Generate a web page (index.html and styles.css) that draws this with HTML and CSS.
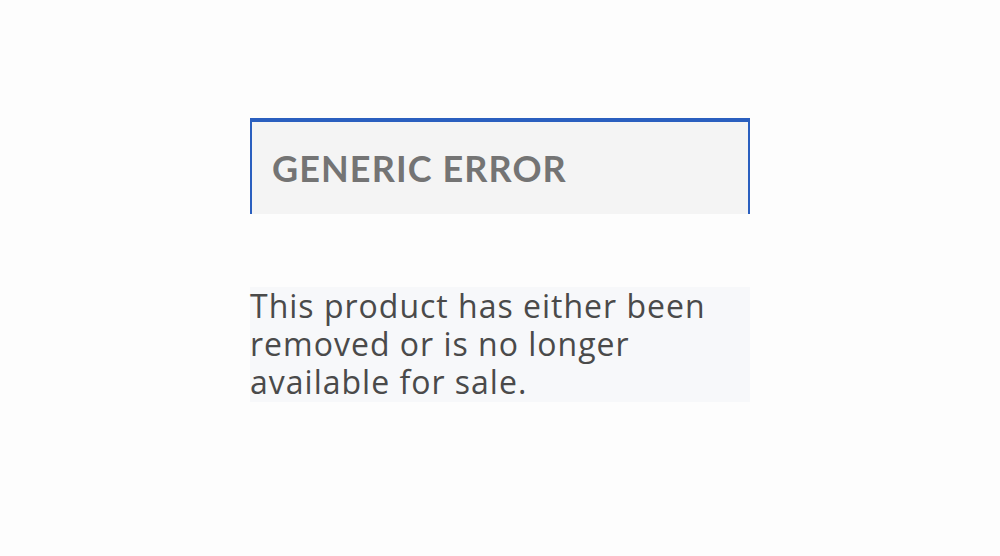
FILE: index.html
```html
<!DOCTYPE html>
<html lang="en">
<head>
<meta charset="utf-8">
<title>Generic Error</title>
<link rel="stylesheet" href="styles.css">
</head>
<body>
<main class="page">
  <section class="error">
    <div class="error-head">
      <h1 class="error-title">GENERIC ERROR</h1>
    </div>
    <p class="error-msg">This product has either been removed or is no longer available for sale.</p>
  </section>
</main>
</body>
</html>
```

FILE: styles.css
```css
html, body {
  margin: 0;
  padding: 0;
  background: #fdfdfd;
}
.page {
  display: flex;
  justify-content: center;
  padding-top: 118px;
}
.error {
  width: 500px;
  display: flex;
  flex-direction: column;
  gap: 73px;
}
.error-head {
  box-sizing: border-box;
  height: 96px;
  background: #f4f4f4;
  border-top: 4px solid #2a5fbf;
  border-left: 2px solid #2a5fbf;
  border-right: 2px solid #2a5fbf;
  padding: 0 20px;
  display: flex;
  align-items: center;
}
.error-title {
  margin: 0;
  font-family: Lato, "Liberation Sans", sans-serif;
  font-weight: 700;
  font-size: 36px;
  line-height: 40px;
  color: #747474;
  letter-spacing: 1.1px;
}
.error-msg {
  margin: 0;
  background: #f7f8fa;
  font-family: "Open Sans", "Liberation Sans", sans-serif;
  font-weight: 400;
  font-size: 32px;
  line-height: 38px;
  letter-spacing: 1px;
  padding-bottom: 1px;
  color: #4a4a4a;
}
```
